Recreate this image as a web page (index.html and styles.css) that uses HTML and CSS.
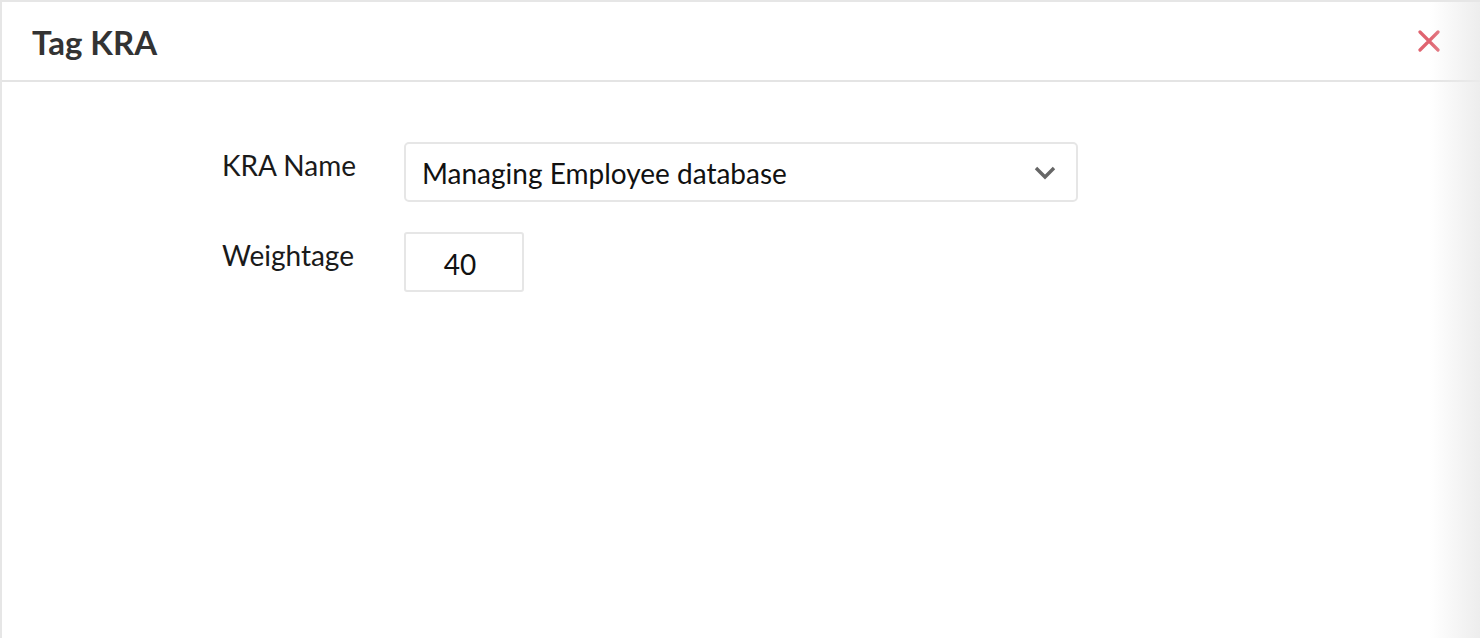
FILE: index.html
```html
<!DOCTYPE html>
<html>
<head>
<meta charset="utf-8">
<link rel="stylesheet" href="styles.css">
</head>
<body>
<div class="dialog">
  <div class="header">
    <h1 class="title">Tag KRA</h1>
    <span class="close" aria-label="close">
      <svg width="22" height="22" viewBox="0 0 22 22"><path d="M2 2 L20 20 M20 2 L2 20" stroke="#e06470" stroke-width="3.2" stroke-linecap="round" fill="none"/></svg>
    </span>
  </div>
  <div class="body">
    <div class="row">
      <div class="label">KRA Name</div>
      <div class="select">
        <span class="select-text">Managing Employee database</span>
        <svg class="chev" width="22" height="14" viewBox="0 0 22 14"><path d="M2 2 L11 11 L20 2" stroke="#666" stroke-width="3.4" fill="none"/></svg>
      </div>
    </div>
    <div class="row">
      <div class="label">Weightage</div>
      <div class="input">40</div>
    </div>
  </div>
  <div class="shade"></div>
</div>
</body>
</html>
```
FILE: styles.css
```css
html, body {
  margin: 0;
  padding: 0;
  background: #fff;
}
body {
  font-family: Lato, "Open Sans", sans-serif;
  width: 1480px;
  height: 638px;
  overflow: hidden;
}
.dialog {
  position: relative;
  width: 1480px;
  height: 638px;
  box-sizing: border-box;
  border-top: 2px solid #e6e6e6;
  border-left: 2px solid #e6e6e6;
  background: #fff;
}
.header {
  height: 78px;
  border-bottom: 2px solid #e4e4e4;
  display: flex;
  align-items: center;
  justify-content: space-between;
  padding: 0 40px 0 30px;
}
.title {
  margin: 0;
  font-size: 33px;
  font-weight: 700;
  color: #333;
  padding-top: 2px;
}
.close {
  display: flex;
  width: 22px;
  height: 22px;
}
.body {
  padding: 60px 0 0 220px;
  display: flex;
  flex-direction: column;
  gap: 30px;
}
.row {
  display: flex;
  align-items: flex-start;
}
.label {
  width: 182px;
  font-size: 28px;
  color: #1a1a1a;
  padding-top: 6px;
}
.select {
  width: 674px;
  height: 60px;
  box-sizing: border-box;
  border: 2px solid #e6e6e6;
  border-radius: 5px;
  display: flex;
  align-items: center;
  justify-content: space-between;
  padding: 2px 20px 0 16px;
}
.select-text {
  font-size: 28px;
  color: #111;
}
.chev {
  display: block;
}
.input {
  width: 120px;
  height: 60px;
  box-sizing: border-box;
  border: 2px solid #e6e6e6;
  border-radius: 3px;
  display: flex;
  align-items: center;
  justify-content: center;
  font-size: 28px;
  color: #111;
  padding-top: 4px;
  padding-right: 8px;
}
.shade {
  position: absolute;
  top: 0;
  right: 0;
  width: 50px;
  height: 100%;
  background: linear-gradient(to right, rgba(230,230,230,0), rgba(235,235,235,0.9));
  pointer-events: none;
}
```
